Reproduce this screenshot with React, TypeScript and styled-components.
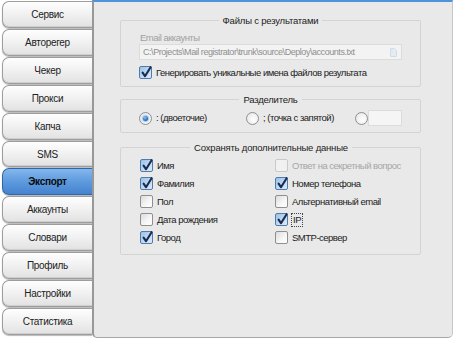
import React from 'react';
import styled, { createGlobalStyle, css } from 'styled-components';

const Global = createGlobalStyle`
  *, *::before, *::after { box-sizing: border-box; }
  html, body { margin: 0; padding: 0; background: #fff; }
  body { font-family: "Liberation Sans", Arial, sans-serif; font-size: 9.5px; letter-spacing: -0.5px; color: #1b1b1b; }
`;

const Window = styled.div`
  display: flex;
  width: 454px;
  height: 339px;
  overflow: hidden;
`;

const Sidebar = styled.nav`
  flex: none;
  width: 92px;
  height: 335px;
  padding: 1px 0 0 2px;
  display: grid;
  grid-template-rows: repeat(12, 1fr);
  row-gap: 1px;
`;

const Tab = styled.div<{ $active?: boolean }>`
  display: flex;
  align-items: center;
  justify-content: center;
  border: 1px solid #9d9d9d;
  border-right: none;
  border-radius: 7px 0 0 7px;
  background: linear-gradient(#fefefe, #f2f2f2 45%, #e2e2e2);
  box-shadow: inset 0 -1px 0 #cfcfcf, 0 1px 1px rgba(0, 0, 0, 0.28);
  font-size: 10px;
  letter-spacing: -0.3px;
  color: #222;
  ${(p) =>
    p.$active &&
    css`
      background: linear-gradient(#84b7ec, #5e9ade 50%, #4583cf);
      border-color: #2f66a8;
      box-shadow: 0 1px 1px rgba(0, 0, 0, 0.3);
      font-weight: bold;
      color: #0a0a0a;
    `}
`;

const Panel = styled.main`
  flex: 1;
  height: 338px;
  margin-right: 1px;
  background: #e9e9e9;
  border-top: 2px solid #4e94dc;
  border-left: 2px solid #989898;
  border-right: 1px solid #c6c6c6;
  border-bottom: 1px solid #a6a6a6;
  border-radius: 0 0 5px 5px;
  padding: 12px 0 0 26px;
  display: flex;
  flex-direction: column;
  gap: 6px;
`;

const Group = styled.fieldset<{ $pad: string; $gap?: number }>`
  margin: ${(p) => p.$gap ?? 0}px 0 0 0;
  width: 301px;
  min-inline-size: auto;
  border: 1px solid #d3d3d3;
  border-radius: 2px;
  padding: ${(p) => p.$pad};
`;

const Legend = styled.legend`
  margin: 0 auto;
  padding: 0 4px;
  line-height: 13px;
  font-size: 9.5px;
  letter-spacing: -0.2px;
  color: #1b1b1b;
`;

const FieldLabel = styled.div`
  line-height: 10px;
  color: #a0a0a0;
  padding-left: 1px;
`;

const PathInput = styled.div`
  margin-top: 1px;
  height: 16px;
  display: flex;
  align-items: center;
  justify-content: space-between;
  padding: 0 4px 0 3px;
  background: #f3f3f3;
  border: 1px solid #dcdcdc;
  color: #8e8e8e;
  font-size: 9px;
  letter-spacing: -0.45px;
  white-space: nowrap;
`;

const Row = styled.label<{ $top?: number }>`
  display: flex;
  align-items: center;
  gap: 4px;
  height: 13px;
  margin-top: ${(p) => p.$top ?? 0}px;
  white-space: nowrap;
`;

const Text = styled.span<{ $disabled?: boolean; $focus?: boolean }>`
  color: ${(p) => (p.$disabled ? '#a6a6a6' : '#1b1b1b')};
  line-height: 12px;
  ${(p) =>
    p.$focus &&
    css`
      outline: 1px dotted #444;
      padding: 0 1px;
    `}
`;

const Box = styled.span<{ $on?: boolean; $disabled?: boolean }>`
  position: relative;
  flex: none;
  width: 13px;
  height: 13px;
  border: 1px solid #8f8f8f;
  border-radius: 2px;
  background: linear-gradient(135deg, #dcdcdc, #f7f7f7 60%, #ffffff);
  ${(p) =>
    p.$on &&
    css`
      border-color: #4f7cab;
      background: linear-gradient(135deg, #9cc1e6, #c4dcf3 60%, #dcebf9);
    `}
  ${(p) =>
    p.$disabled &&
    css`
      border-color: #c9c9c9;
      background: #f1f1f1;
    `}
`;

const Tick = styled.svg`
  position: absolute;
  left: 0px;
  top: -3px;
`;

const Radio = styled.span<{ $on?: boolean }>`
  flex: none;
  width: 13px;
  height: 13px;
  border-radius: 50%;
  border: 1px solid #8f8f8f;
  background: radial-gradient(circle at 60% 60%, #ffffff, #e3e3e3);
  display: flex;
  align-items: center;
  justify-content: center;
  ${(p) =>
    p.$on &&
    css`
      &::after {
        content: '';
        width: 5px;
        height: 5px;
        border-radius: 50%;
        background: radial-gradient(circle at 40% 35%, #8fc3f5, #1c5fb3 70%);
        box-shadow: 0 0 1px 1px #9cc8ee;
      }
    `}
`;

const RadioGrid = styled.div`
  display: grid;
  grid-template-columns: 107px 109px auto;
  align-items: center;
  height: 16px;
`;

const RadioRow = styled.label`
  display: flex;
  align-items: center;
  gap: 4px;
  white-space: nowrap;
`;

const SmallInput = styled.span`
  width: 34px;
  height: 16px;
  background: #f5f5f5;
  border: 1px solid #dcdcdc;
  margin-left: -4px;
`;

const CheckGrid = styled.div`
  display: grid;
  grid-template-columns: 135px 1fr;
  grid-auto-rows: 13px;
  row-gap: 5px;
`;

const Check = ({
  on,
  disabled,
  children,
  focus,
  top,
}: {
  on?: boolean;
  disabled?: boolean;
  focus?: boolean;
  top?: number;
  children: React.ReactNode;
}) => (
  <Row $top={top}>
    <Box $on={on} $disabled={disabled}>
      {on && (
        <Tick width="13" height="15" viewBox="0 0 13 15">
          <path d="M2.6 8.6 L5 12.2 L10.6 3.2" stroke="#1b2c52" strokeWidth="2.1" fill="none" strokeLinecap="round" strokeLinejoin="round" />
        </Tick>
      )}
    </Box>
    <Text $disabled={disabled} $focus={focus}>
      {children}
    </Text>
  </Row>
);

const FileIcon = () => (
  <svg width="7" height="9" viewBox="0 0 7 9">
    <path d="M0.5 0.5 H4.5 L6.5 2.5 V8.5 H0.5 Z" fill="#e4ebf2" stroke="#d3dce6" />
  </svg>
);

const tabs = [
  'Сервис',
  'Авторегер',
  'Чекер',
  'Прокси',
  'Капча',
  'SMS',
  'Экспорт',
  'Аккаунты',
  'Словари',
  'Профиль',
  'Настройки',
  'Статистика',
];

export default function App() {
  return (
    <>
      <Global />
      <Window>
        <Sidebar>
          {tabs.map((t) => (
            <Tab key={t} $active={t === 'Экспорт'}>
              {t}
            </Tab>
          ))}
        </Sidebar>
        <Panel>
          <Group $pad="6px 18px 7px 18px">
            <Legend>Файлы с результатами</Legend>
            <FieldLabel>Email аккаунты</FieldLabel>
            <PathInput>
              <span>C:\Projects\Mail registrator\trunk\source\Deploy\accounts.txt</span>
              <FileIcon />
            </PathInput>
            <Check on top={6}>
              Генерировать уникальные имена файлов результата
            </Check>
          </Group>
          <Group $pad="4px 18px 6px 18px">
            <Legend>Разделитель</Legend>
            <RadioGrid>
              <RadioRow>
                <Radio $on />
                <Text>: (двоеточие)</Text>
              </RadioRow>
              <RadioRow>
                <Radio />
                <Text>; (точка с запятой)</Text>
              </RadioRow>
              <RadioRow>
                <Radio />
                <SmallInput />
              </RadioRow>
            </RadioGrid>
          </Group>
          <Group $pad="5px 18px 10px 19px" $gap={2}>
            <Legend>Сохранять дополнительные данные</Legend>
            <CheckGrid>
              <Check on>Имя</Check>
              <Check disabled>Ответ на секретный вопрос</Check>
              <Check on>Фамилия</Check>
              <Check on>Номер телефона</Check>
              <Check>Пол</Check>
              <Check>Альтернативный email</Check>
              <Check>Дата рождения</Check>
              <Check on focus>
                IP
              </Check>
              <Check on>Город</Check>
              <Check>SMTP-сервер</Check>
            </CheckGrid>
          </Group>
        </Panel>
      </Window>
    </>
  );
}
